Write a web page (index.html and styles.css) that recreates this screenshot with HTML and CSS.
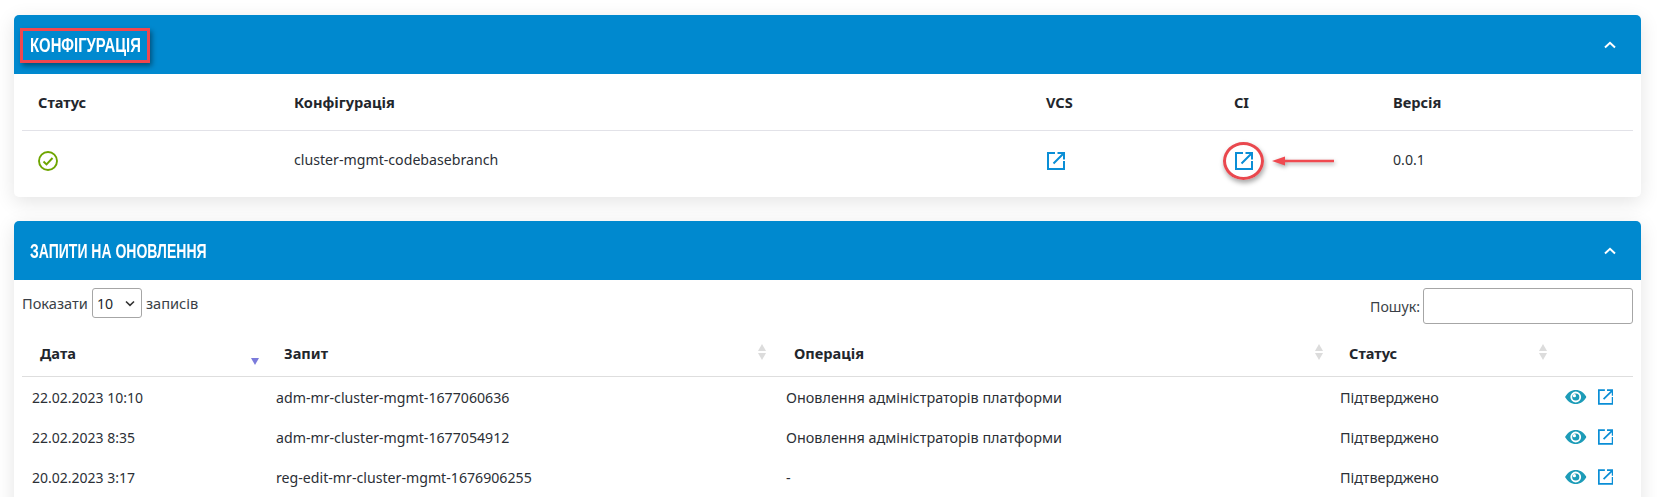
FILE: index.html
```html
<!DOCTYPE html>
<html lang="uk">
<head>
<meta charset="utf-8">
<title>Конфігурація</title>
<link rel="stylesheet" href="styles.css">
</head>
<body>
<svg class="defs" width="0" height="0">
  <defs>
    <symbol id="ext" viewBox="0 0 18 18">
      <path d="M8 1H1v16h16v-8" fill="none" stroke="currentColor" stroke-width="2"/>
      <path d="M10.500 1H17v6.500M16.500 1.500 6.500 11.500" fill="none" stroke="currentColor" stroke-width="2"/>
    </symbol>
    <symbol id="eye" viewBox="0 0 24 16">
      <path fill-rule="evenodd" d="M0 8C3 3 7 .2 12 .2S21 3 24 8c-3 5-7 7.800-12 7.800S3 13 0 8Zm12 6a6 6 0 1 0 0-12 6 6 0 0 0 0 12Z" fill="currentColor"/>
      <circle cx="12" cy="8" r="4" fill="currentColor"/>
      <circle cx="10.500" cy="6.500" r="1.800" fill="#fff"/>
    </symbol>
    <symbol id="chev" viewBox="0 0 12 8">
      <path d="M1 6.500 6 1.800l5 4.700" fill="none" stroke="currentColor" stroke-width="2"/>
    </symbol>
  </defs>
</svg>
<main class="page">
  <section class="card card-config">
    <header class="card-head">
      <h2 class="card-title">КОНФІГУРАЦІЯ</h2>
      <svg class="chev"><use href="#chev"/></svg>
    </header>
    <div class="card-body">
      <table class="tbl config">
        <colgroup><col class="c1"><col class="c2"><col class="c3"><col class="c4"><col></colgroup>
        <thead>
          <tr><th>Статус</th><th>Конфігурація</th><th>VCS</th><th>CI</th><th>Версія</th></tr>
        </thead>
        <tbody>
          <tr>
            <td>
              <svg class="ok" viewBox="0 0 20 20"><circle cx="10" cy="10" r="9" fill="none" stroke="currentColor" stroke-width="1.900"/><path d="M5.500 10.500 8.500 13.500 14.500 7" fill="none" stroke="currentColor" stroke-width="1.900"/></svg>
            </td>
            <td>cluster-mgmt-codebasebranch</td>
            <td><svg class="ext-lg"><use href="#ext"/></svg></td>
            <td><svg class="ext-lg"><use href="#ext"/></svg></td>
            <td>0.0.1</td>
          </tr>
        </tbody>
      </table>
    </div>
    <span class="mark-rect"></span>
    <span class="mark-circle"></span>
    <svg class="mark-arrow" viewBox="0 0 64 12"><path d="M62 6H12" stroke="#f04a50" stroke-width="2.500" fill="none"/><path d="M0 6 13 1.500v9Z" fill="#f04a50"/></svg>
  </section>

  <section class="card card-requests">
    <header class="card-head">
      <h2 class="card-title">ЗАПИТИ НА ОНОВЛЕННЯ</h2>
      <svg class="chev"><use href="#chev"/></svg>
    </header>
    <div class="card-body">
      <div class="controls">
        <label class="length">Показати
          <select class="length-select"><option>10</option></select>
          записів</label>
        <label class="search">Пошук:<input class="search-input" type="text"></label>
      </div>
      <table class="tbl requests">
        <colgroup><col class="r1"><col class="r2"><col class="r3"><col class="r4"><col></colgroup>
        <thead>
          <tr>
            <th><span class="th-text">Дата</span><span class="sort sort-desc"></span></th>
            <th><span class="th-text">Запит</span><span class="sort sort-wide"></span></th>
            <th><span class="th-text">Операція</span><span class="sort"></span></th>
            <th><span class="th-text">Статус</span><span class="sort"></span></th>
            <th></th>
          </tr>
        </thead>
        <tbody>
          <tr>
            <td class="date">22.02.2023 10:10</td>
            <td>adm-mr-cluster-mgmt-1677060636</td>
            <td class="cyr">Оновлення адміністраторів платформи</td>
            <td class="cyr state">Підтверджено</td>
            <td><div class="actions"><svg class="eye"><use href="#eye"/></svg><svg class="ext-sm"><use href="#ext"/></svg></div></td>
          </tr>
          <tr>
            <td class="date">22.02.2023 8:35</td>
            <td>adm-mr-cluster-mgmt-1677054912</td>
            <td class="cyr">Оновлення адміністраторів платформи</td>
            <td class="cyr state">Підтверджено</td>
            <td><div class="actions"><svg class="eye"><use href="#eye"/></svg><svg class="ext-sm"><use href="#ext"/></svg></div></td>
          </tr>
          <tr>
            <td class="date">20.02.2023 3:17</td>
            <td>reg-edit-mr-cluster-mgmt-1676906255</td>
            <td class="cyr">-</td>
            <td class="cyr state">Підтверджено</td>
            <td><div class="actions"><svg class="eye"><use href="#eye"/></svg><svg class="ext-sm"><use href="#ext"/></svg></div></td>
          </tr>
        </tbody>
      </table>
    </div>
  </section>
</main>
</body>
</html>
```
FILE: styles.css
```css
* { box-sizing: border-box; }
html, body { margin: 0; height: 497px; overflow: hidden; background: #fff; }
body { font-family: "Noto Sans", sans-serif; font-size: 14.16px; color: #2b2f36; }
.defs { position: absolute; }
.page { padding: 15px 16px 0 14px; display: flex; flex-direction: column; gap: 24px; background: #fff; }
.card { position: relative; background: #fff; border-radius: 5px; box-shadow: 0 5px 20px rgba(0,0,0,.11); }
.card-config { height: 182px; }
.card-requests { height: 300px; }
.card-head { height: 59px; background: #0089cf; border-radius: 5px 5px 0 0; display: flex; align-items: center; justify-content: space-between; padding: 0 16px; color: #fff; }
.card-title { margin: 0; font-family: "Liberation Sans", sans-serif; font-size: 20.5px; font-weight: 700; line-height: 24px; white-space: nowrap; width: 240px; transform-origin: left center; transform: scaleX(.725); }
.card-requests .card-title { transform: scaleX(.683); }
.chev { width: 12px; height: 8px; margin-right: 9px; color: #fff; }
.card-body { padding: 0 8px; }
.tbl { width: 100%; border-collapse: collapse; table-layout: fixed; }
.tbl th { text-align: left; font-weight: 700; font-size: 14.6px; color: #22262c; white-space: nowrap; }
.tbl td { white-space: nowrap; }
.config th { height: 56px; padding: 0 0 0 16px; border-bottom: 1px solid #e2e2e8; }
.config td { height: 66px; padding: 0 0 7px 16px; }
.c1 { width: 256px; }
.c2 { width: 752px; }
.c3 { width: 188px; }
.c4 { width: 159px; }
.ok { display: block; width: 20px; height: 20px; margin-top: 2px; color: #6ea500; }
.ext-lg { display: block; width: 18px; height: 18px; margin: 2px 0 0 1px; color: #0a8ed6; }
.mark-rect { position: absolute; left: 6px; top: 13px; width: 130px; height: 35px; border: 3px solid #f2474e; box-shadow: 2px 3px 5px rgba(0,0,0,.4); }
.mark-circle { position: absolute; left: 1209px; top: 127px; width: 41px; height: 38px; border: 3px solid #e9484e; border-radius: 50%; box-shadow: 1px 3px 5px rgba(0,0,0,.35); }
.mark-arrow { position: absolute; left: 1258px; top: 140px; width: 64px; height: 12px; filter: drop-shadow(1px 2px 2px rgba(0,0,0,.35)); }
.controls { display: flex; justify-content: space-between; height: 52px; padding-top: 8px; }
.length { display: flex; align-items: flex-start; gap: 4px; line-height: 30px; height: 30px; font-size: 14.6px; color: #3a3f47; }
.length-select { appearance: none; width: 50px; height: 30px; margin: 0; padding: 0 0 0 4px; font: 14.16px "Noto Sans", sans-serif; color: #22262c; border: 1px solid #a6a6a6; border-radius: 3px; background: #fff url("data:image/svg+xml,%3Csvg xmlns='http://www.w3.org/2000/svg' width='10' height='7'%3E%3Cpath d='M1 1.500 5 5.300 9 1.500' fill='none' stroke='%23333' stroke-width='1.600'/%3E%3C/svg%3E") no-repeat right 6px center; }
.search { display: flex; align-items: center; gap: 3px; height: 36px; color: #3a3f47; }
.search-input { width: 210px; height: 36px; background: #fff; border: 1px solid #a6a6a6; border-radius: 3px; }
.requests th { position: relative; height: 44px; padding: 0 0 0 18px; border-bottom: 1px solid #dedede; }
.requests td { height: 40px; padding: 2px 0 0 10px; }
.requests td.date { font-size: 14px; }
.requests td.cyr { font-size: 14.4px; }
.requests td.state { padding-left: 9px; }
.th-text { position: relative; top: -1px; }
.r1 { width: 244px; }
.r2 { width: 510px; }
.r3 { width: 555px; }
.r4 { width: 224px; }
.sort { position: absolute; right: 8px; top: 12px; width: 8px; height: 18px; }
.sort-wide { right: 10px; }
.sort::before, .sort::after { content: ""; position: absolute; left: 0; border-left: 4px solid transparent; border-right: 4px solid transparent; }
.sort::before { top: 0; border-bottom: 7px solid #dcdcdc; }
.sort::after { top: 9px; border-top: 7px solid #dcdcdc; }
.sort-desc { right: 7px; }
.sort-desc::before { display: none; }
.sort-desc::after { border-top-color: #7b7bdb; top: 14px; }
.actions { display: flex; align-items: center; justify-content: flex-end; gap: 11px; padding-right: 20px; }
.eye { width: 25px; height: 16px; color: #1d9cb8; }
.ext-sm { width: 18px; height: 18px; margin-top: -1px; color: #0a8ed6; }
```
